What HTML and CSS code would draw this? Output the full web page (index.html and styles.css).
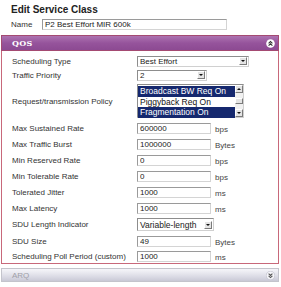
FILE: index.html
```html
<!DOCTYPE html>
<html lang="en">
<head>
    <meta charset="UTF-8">
    <title>Edit Service Class</title>
    <link rel="stylesheet" href="styles.css">
</head>
<body>
    <h1 class="title">Edit Service Class</h1>
    <div class="name-row">
        <label for="name">Name</label>
        <input type="text" id="name" class="text-input name-input" value="P2 Best Effort MIR 600k">
    </div>

    <div class="section qos">
        <div class="section-head">
            <span class="section-title">QOS</span>
            <svg class="toggle" width="9" height="9" viewBox="0 0 9 9">
                <circle cx="4.5" cy="4.5" r="4.3" fill="#fff"/>
                <path d="M2.6 4.4 L4.5 2.6 L6.4 4.4 M2.6 6.6 L4.5 4.8 L6.4 6.6" stroke="#333" stroke-width="1.1" fill="none"/>
            </svg>
        </div>
        <div class="section-body">
            <div class="row row-sel">
                <span class="lbl">Scheduling Type</span>
                <div class="fake-select sel-wide"><span>Best Effort</span><b class="arrow"></b></div>
            </div>
            <div class="row row-sel">
                <span class="lbl">Traffic Priority</span>
                <div class="fake-select sel-small"><span>2</span><b class="arrow"></b></div>
            </div>
            <div class="row row-list">
                <span class="lbl">Request/transmission Policy</span>
                <div class="listbox">
                    <div class="options">
                        <div class="opt on">Broadcast BW Req On</div>
                        <div class="opt">Piggyback Req On</div>
                        <div class="opt on">Fragmentation On</div>
                    </div>
                    <div class="scrollbar">
                        <b class="sb-btn up"></b>
                        <b class="sb-thumb"></b>
                        <b class="sb-btn down"></b>
                    </div>
                </div>
            </div>
            <div class="row">
                <span class="lbl">Max Sustained Rate</span>
                <input type="text" class="text-input" value="600000">
                <span class="unit">bps</span>
            </div>
            <div class="row">
                <span class="lbl">Max Traffic Burst</span>
                <input type="text" class="text-input" value="1000000">
                <span class="unit">Bytes</span>
            </div>
            <div class="row">
                <span class="lbl">Min Reserved Rate</span>
                <input type="text" class="text-input" value="0">
                <span class="unit">bps</span>
            </div>
            <div class="row">
                <span class="lbl">Min Tolerable Rate</span>
                <input type="text" class="text-input" value="0">
                <span class="unit">bps</span>
            </div>
            <div class="row">
                <span class="lbl">Tolerated Jitter</span>
                <input type="text" class="text-input" value="1000">
                <span class="unit">ms</span>
            </div>
            <div class="row">
                <span class="lbl">Max Latency</span>
                <input type="text" class="text-input" value="1000">
                <span class="unit">ms</span>
            </div>
            <div class="row row-sdu">
                <span class="lbl">SDU Length Indicator</span>
                <div class="fake-select sel-mid"><span>Variable-length</span><b class="arrow"></b></div>
            </div>
            <div class="row">
                <span class="lbl">SDU Size</span>
                <input type="text" class="text-input" value="49">
                <span class="unit">Bytes</span>
            </div>
            <div class="row row-last">
                <span class="lbl">Scheduling Poll Period (custom)</span>
                <input type="text" class="text-input" value="1000">
                <span class="unit">ms</span>
            </div>
        </div>
    </div>

    <div class="section arq">
        <div class="section-head">
            <span class="section-title">ARQ</span>
            <svg class="toggle" width="9" height="9" viewBox="0 0 9 9">
                <circle cx="4.5" cy="4.5" r="4.3" fill="#f4f4f8" stroke="#b8b8c4" stroke-width="0.6"/>
                <path d="M2.6 2.6 L4.5 4.4 L6.4 2.6 M2.6 4.8 L4.5 6.6 L6.4 4.8" stroke="#555" stroke-width="1.1" fill="none"/>
            </svg>
        </div>
    </div>
</body>
</html>
```

FILE: styles.css
```css
body {
    margin: 0;
    padding: 0;
    background: #fff;
    font-family: "Liberation Sans", Arial, sans-serif;
    font-size: 8px;
    color: #333;
}
.title {
    margin: 0;
    padding: 4px 0 0 11px;
    height: 12px;
    font-size: 10px;
    font-weight: bold;
    color: #222;
    line-height: 12px;
}
.name-row {
    display: flex;
    align-items: center;
    height: 16px;
    padding-left: 11px;
}
.name-row label {
    width: 31px;
}
.text-input {
    box-sizing: border-box;
    width: 74px;
    height: 11px;
    margin: 0;
    padding: 0 2px;
    border: 1px solid #9a9a9a;
    border-right-color: #d4d4d4;
    border-bottom-color: #d4d4d4;
    font-family: "Liberation Sans", Arial, sans-serif;
    font-size: 8px;
    color: #222;
    background: #fff;
    outline: none;
}
.name-input {
    width: 185px;
    height: 11px;
}
.section {
    margin: 0 2px 0 1px;
}
.section-head {
    display: flex;
    align-items: center;
    justify-content: space-between;
    box-sizing: border-box;
    padding: 0 3px 0 10px;
}
.qos {
    margin-top: 3px;
}
.qos .section-head {
    height: 16px;
    background: linear-gradient(to bottom, #ad73b1, #96549c 50%, #8c4a92);
    border: 1px solid #a44a72;
}
.qos .section-title {
    font-family: "DejaVu Serif", "Liberation Serif", serif;
    font-weight: bold;
    font-size: 8px;
    color: #fff;
    letter-spacing: 0.3px;
}
.section-body {
    border: 1px solid #c8687a;
    border-top: none;
    padding: 3px 0 0 10px;
}
.row {
    display: flex;
    align-items: center;
    height: 16px;
}
.row-sel {
    height: 14px;
}
.row-list {
    height: 38px;
}
.row-sdu {
    height: 17px;
}
.row-last {
    height: 14px;
}
.lbl {
    width: 125px;
    flex-shrink: 0;
    white-space: nowrap;
}
.unit {
    margin-left: 4px;
    color: #444;
    padding-top: 2px;
}
.fake-select {
    box-sizing: border-box;
    display: flex;
    align-items: center;
    justify-content: space-between;
    height: 11px;
    padding: 0 1px 0 2px;
    border: 1px solid #8d8d8d;
    border-right-color: #d0d0d0;
    border-bottom-color: #d0d0d0;
    background: #fff;
    color: #222;
}
.sel-wide {
    width: 112px;
}
.sel-small {
    width: 70px;
}
.sel-mid {
    width: 77px;
    height: 13px;
    font-size: 8.5px;
}
.arrow {
    box-sizing: border-box;
    position: relative;
    width: 8px;
    height: 8px;
    background: #e4e4e4;
    border: 1px solid;
    border-color: #fff #7a7a7a #7a7a7a #fff;
}
.arrow::after, .sb-btn::after {
    content: "";
    position: absolute;
    left: 1px;
    top: 2px;
    border-left: 2px solid transparent;
    border-right: 2px solid transparent;
    border-top: 2px solid #111;
}
.listbox {
    box-sizing: border-box;
    display: flex;
    width: 107px;
    height: 34px;
    border: 1px solid #8d8d8d;
    border-right-color: #d0d0d0;
    border-bottom-color: #d0d0d0;
    background: #fff;
    font-size: 8.5px;
}
.options {
    flex: 1;
    padding-top: 1px;
}
.opt {
    height: 10.5px;
    line-height: 10.5px;
    padding-left: 2px;
    color: #111;
}
.opt.on {
    background: #15286e;
    color: #fff;
}
.scrollbar {
    display: flex;
    flex-direction: column;
    justify-content: space-between;
    width: 8px;
    background: #f0f0f0;
}
.sb-btn, .sb-thumb {
    box-sizing: border-box;
    position: relative;
    display: block;
    width: 8px;
    height: 8px;
    background: #e4e4e4;
    border: 1px solid;
    border-color: #fff #7a7a7a #7a7a7a #fff;
}
.sb-thumb {
    height: 6px;
}
.sb-btn.up::after {
    border-top: none;
    border-bottom: 2px solid #111;
}
.arq {
    margin-top: 4px;
}
.arq .section-head {
    height: 14px;
    background: linear-gradient(to bottom, #f6f6fa, #dcdce6 60%, #c9c9d6);
    border: 1px solid #c4c4cc;
}
.arq .section-title {
    font-size: 8px;
    color: #a0a0a8;
}
```
